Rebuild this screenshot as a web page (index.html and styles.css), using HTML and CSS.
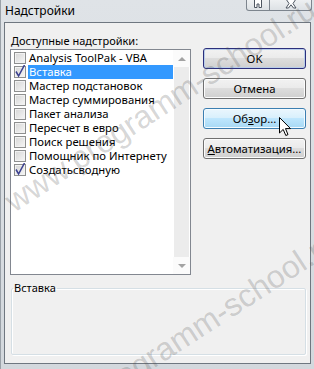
FILE: index.html
```html
<!DOCTYPE html>
<html lang="ru">
<head>
<meta charset="utf-8">
<title>Надстройки</title>
<link rel="stylesheet" href="styles.css">
</head>
<body>
<div class="window">
  <div class="titlebar">
    <span class="title">Надстройки</span>
    <div class="caption-buttons">
      <span class="cbtn help"><svg width="10" height="10" viewBox="0 0 10 10"><path d="M1.5 0 V8.5 H4 V5 H6 V8.5 H8.5 V0" fill="#fff" stroke="#4d5560" stroke-width="1"/></svg></span>
      <span class="cbtn close"><svg width="12" height="10" viewBox="0 0 12 10"><path d="M1 0 L4 4.5 L1 9 H3.5 L6 5.8 L8.5 9 H11 L8 4.5 L11 0" fill="#fff" stroke="#4d5560" stroke-width="1"/></svg></span>
    </div>
  </div>
  <div class="client">
    <div class="main">
      <div class="left">
        <div class="label"><span class="ul">Д</span>оступные надстройки:</div>
        <div class="listbox">
          <ul class="items">
            <li class="item"><span class="cb"></span><span class="txt">Analysis ToolPak - VBA</span></li>
            <li class="item selected"><span class="cb checked"><svg width="12" height="13" viewBox="0 0 12 13"><path d="M2 6.5 L4.6 11 L10.5 0" fill="none" stroke="#3a3f8f" stroke-width="1.5"/></svg></span><span class="txt">Вставка</span></li>
            <li class="item"><span class="cb"></span><span class="txt">Мастер подстановок</span></li>
            <li class="item"><span class="cb"></span><span class="txt">Мастер суммирования</span></li>
            <li class="item"><span class="cb"></span><span class="txt">Пакет анализа</span></li>
            <li class="item"><span class="cb"></span><span class="txt">Пересчет в евро</span></li>
            <li class="item"><span class="cb"></span><span class="txt">Поиск решения</span></li>
            <li class="item"><span class="cb"></span><span class="txt">Помощник по Интернету</span></li>
            <li class="item"><span class="cb checked"><svg width="12" height="13" viewBox="0 0 12 13"><path d="M2 6.5 L4.6 11 L10.5 0" fill="none" stroke="#3a3f8f" stroke-width="1.5"/></svg></span><span class="txt">Создатьсводную</span></li>
          </ul>
          <div class="scrollbar">
            <span class="sb-btn"><span class="arrow up"></span></span>
            <span class="sb-track"></span>
            <span class="sb-btn"><span class="arrow down"></span></span>
          </div>
        </div>
      </div>
      <div class="buttons">
        <button class="btn default">OK</button>
        <button class="btn">Отмена</button>
        <button class="btn hover">Об<span class="ul">з</span>ор...</button>
        <button class="btn"><span class="ul">А</span>втоматизация...</button>
      </div>
    </div>
    <fieldset class="group"><legend>Вставка</legend></fieldset>
  </div>
  <div class="watermark w1">www.programm-school.ru</div>
  <div class="watermark w2">www.programm-school.ru</div>
  <svg class="cursor" width="13" height="20" viewBox="0 0 13 20"><path d="M0.5 0.5 V16 L4.2 12.4 L6.8 18.5 L9 17.6 L6.5 11.6 L11.5 11.6 Z" fill="#fff" stroke="#000" stroke-width="1" stroke-linejoin="miter"/></svg>
</div>
</body>
</html>
```

FILE: styles.css
```css
* { box-sizing: border-box; }
html, body { margin: 0; padding: 0; }
body {
  width: 314px;
  height: 369px;
  overflow: hidden;
  font-family: "Segoe UI", "Noto Sans", sans-serif;
  font-size: 11px;
  color: #000;
  background: #c6ccd3;
}
.window {
  position: relative;
  width: 314px;
  height: 369px;
  display: flex;
  flex-direction: column;
  padding: 0 3px 5px 3px;
  background: linear-gradient(#dfe3e7, #d3d8dd);
  border-left: 1px solid #9aa1a8;
  overflow: hidden;
}
.titlebar {
  height: 22px;
  display: flex;
  align-items: flex-start;
  margin: 0 -3px;
  padding-left: 4px;
}
.title {
  font-size: 12px;
  line-height: 22px;
  color: #000;
}
.caption-buttons {
  margin-left: auto;
  margin-right: 2px;
  display: flex;
  height: 11px;
  overflow: hidden;
}
.cbtn {
  display: flex;
  align-items: flex-end;
  justify-content: center;
  height: 11px;
  padding-bottom: 1px;
  border: 1px solid #7d858e;
  border-top: none;
  background: linear-gradient(#eef0f2, #dde1e5);
}
.cbtn.help { width: 24px; border-radius: 0 0 0 3px; }
.cbtn.close { width: 42px; border-left: none; border-radius: 0 0 3px 0; }
.client {
  flex: 1;
  background: #f0f0f0;
  border: 1px solid #6f7780;
  display: flex;
  flex-direction: column;
  padding: 9px 4px 0 5px;
}
.main {
  display: flex;
  gap: 12px;
}
.left { width: 181px; }
.label {
  height: 17px;
  line-height: 17px;
  padding-left: 1px;
  white-space: nowrap;
}
.ul { text-decoration: underline; }
.listbox {
  height: 226px;
  border: 1px solid #828790;
  background: #fff;
  display: flex;
}
.items {
  list-style: none;
  margin: 0;
  padding: 1px 0 0 0;
  flex: 1;
}
.item {
  height: 14px;
  display: flex;
  align-items: center;
  padding-left: 3px;
  white-space: nowrap;
  font-size: 11.3px;
}
.cb {
  width: 12px;
  height: 12px;
  flex: none;
  border: 1px solid #8e8f8f;
  background: linear-gradient(135deg, #d6d6d6, #f6f6f6);
  box-shadow: inset 0 0 0 1px #f2f2f2;
  position: relative;
  margin-right: 2px;
}
.cb svg { position: absolute; left: -1px; top: -2px; }
.txt {
  flex: 1;
  height: 14px;
  line-height: 14px;
  padding-left: 1px;
}
.selected .txt { background: #3399ff; color: #fff; }
.scrollbar {
  width: 17px;
  display: flex;
  flex-direction: column;
  background: #fff;
}
.sb-btn {
  height: 17px;
  display: flex;
  align-items: center;
  justify-content: center;
  background: #fbfbfb;
}
.sb-track { flex: 1; background: #ececec; margin: 0 1px; }
.arrow { width: 0; height: 0; border-left: 4px solid transparent; border-right: 4px solid transparent; }
.arrow.up { border-bottom: 4px solid #a3a3a3; }
.arrow.down { border-top: 4px solid #a3a3a3; }
.buttons {
  display: flex;
  flex-direction: column;
  gap: 9px;
  padding-top: 16px;
  width: 103px;
}
.btn {
  height: 21px;
  width: 103px;
  font: inherit;
  font-size: 11.3px;
  color: #000;
  padding: 0;
  border: 1px solid #707070;
  border-radius: 3px;
  background: linear-gradient(#f2f2f2 0%, #ebebeb 45%, #dddddd 50%, #cfcfcf 100%);
  box-shadow: inset 0 0 0 1px #fcfcfc;
  line-height: 18px;
  text-align: center;
}
.btn.default {
  border-color: #2b2f7c;
  box-shadow: inset 0 0 0 1px #b9cdea;
}
.btn.hover {
  border-color: #3c7fb1;
  background: linear-gradient(#eaf6fd 0%, #d9f0fc 45%, #bee6fd 50%, #a7d9f5 100%);
  box-shadow: inset 0 0 0 1px #f4fbff;
}
.group {
  margin: 6px 0 0 1px;
  padding: 0;
  width: 295px;
  height: 74px;
  border: 1px solid #d5dfe5;
  border-radius: 2px;
  box-shadow: inset 1px 1px 0 #fff, 1px 1px 0 #fff;
  min-width: 0;
}
.group legend {
  margin-left: 1px;
  padding: 0 1px;
  font-size: 11px;
  line-height: 14px;
}
.watermark {
  position: absolute;
  font-family: "Liberation Sans", Arial, sans-serif;
  font-size: 32px;
  line-height: 32px;
  height: 32px;
  white-space: nowrap;
  color: rgba(80, 80, 80, 0.24);
  transform: rotate(-33deg);
  transform-origin: 0 27px;
  pointer-events: none;
}
.w1 { left: 13px; top: 186px; }
.w2 { left: 35px; top: 418px; }
.cursor { position: absolute; left: 278px; top: 117px; }
```
